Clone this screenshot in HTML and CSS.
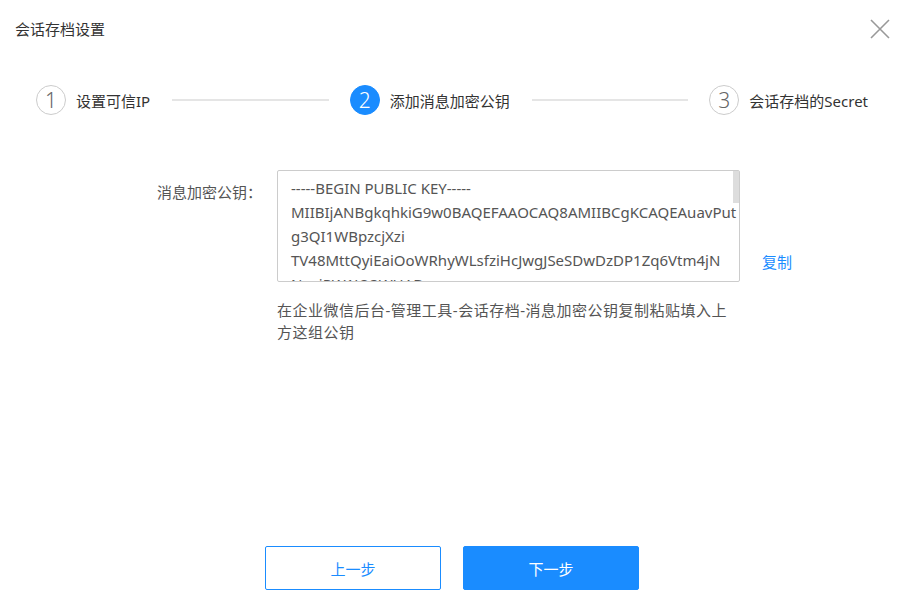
FILE: index.html
```html
<!DOCTYPE html>
<html lang="zh">
<head>
    <meta charset="UTF-8">
    <meta name="viewport" content="width=device-width, initial-scale=1.0">
    <title>会话存档设置</title>
    <link rel="stylesheet" href="styles.css">
</head>
<body>
    <div class="dialog">
        <div class="header">
            <span class="title">会话存档设置</span>
            <span class="close">
                <svg width="20" height="20" viewBox="0 0 20 20"><path d="M1 1L19 19M19 1L1 19" stroke="#999" stroke-width="1.6" fill="none"/></svg>
            </span>
        </div>
        <div class="steps">
            <div class="step">
                <span class="num">1</span>
                <span class="name">设置可信IP</span>
            </div>
            <div class="line"></div>
            <div class="step active">
                <span class="num">2</span>
                <span class="name">添加消息加密公钥</span>
            </div>
            <div class="line"></div>
            <div class="step">
                <span class="num">3</span>
                <span class="name">会话存档的Secret</span>
            </div>
        </div>
        <div class="form">
            <div class="row">
                <label class="label">消息加密公钥：</label>
                <div class="keybox">
                    <div class="key">
                        <div>-----BEGIN PUBLIC KEY-----</div>
                        <div>MIIBIjANBgkqhkiG9w0BAQEFAAOCAQ8AMIIBCgKCAQEAuavPut</div>
                        <div>g3QI1WBpzcjXzi</div>
                        <div>TV48MttQyiEaiOoWRhyWLsfziHcJwgJSeSDwDzDP1Zq6Vtm4jN</div>
                        <div>NoviPW1JO3WHAB</div>
                        <div>kF0r8vU5xLmT2aQpWcZ7sYdE4hGnRtXo9KbL3mVq8uPzA1sC6e</div>
                        <div>DjH2wNf0tYgR5i</div>
                        <div>Zr4hTy8nWcQ1pLs0kEo6bVd9xGf2jAuH3mYtNq7iPwSKd5gLp2</div>
                        <div>zRx9vBn0cMa8qW</div>
                        <div>Pq1wEr5tYu8iOp2aSd6fGh9jKl3zXc7vBn0mQw4eRtHj6kLz1x</div>
                        <div>Cv4bNm8qWe2rTy</div>
                        <div>IDAQAB</div>
                        <div>-----END PUBLIC KEY-----</div>
                    </div>
                    <span class="thumb"></span>
                </div>
                <a class="copy" href="#">复制</a>
            </div>
            <p class="tip">在企业微信后台-管理工具-会话存档-消息加密公钥复制粘贴填入上方这组公钥</p>
        </div>
        <div class="footer">
            <button class="btn">上一步</button>
            <button class="btn primary">下一步</button>
        </div>
    </div>
</body>
</html>
```

FILE: styles.css
```css
body,p{
    margin: 0;
    padding: 0;
}
body{
    font-family: "Noto Sans", "Noto Sans CJK SC", sans-serif;
    color: #333;
    background: #fff;
}
.dialog{
    display: flex;
    flex-direction: column;
    height: 616px;
}
.header{
    display: flex;
    justify-content: space-between;
    align-items: center;
    padding: 17px 22px 0 15px;
    height: 22px;
}
.title{
    font-size: 15px;
    color: #333;
}
.close{
    display: flex;
    margin-top: 2px;
}
.steps{
    display: flex;
    align-items: center;
    padding: 0 44px 0 36px;
    margin-top: 46px;
}
.step{
    display: flex;
    align-items: center;
}
.step .num{
    width: 28px;
    height: 28px;
    border: 1px solid #ccc;
    border-radius: 50%;
    display: flex;
    align-items: center;
    justify-content: center;
    font-size: 21px;
    font-weight: 300;
    color: #666;
}
.step.active .num{
    background: #1a8cff;
    border-color: #1a8cff;
    color: #fff;
}
.step .name{
    margin-left: 10px;
    font-size: 15px;
    color: #333;
}
.line{
    flex: 1;
    height: 2px;
    background: #e5e5e5;
    margin: 0 21px 0 22px;
}
.form{
    margin-top: 55px;
}
.row{
    display: flex;
    align-items: flex-start;
}
.label{
    width: 262px;
    text-align: right;
    font-size: 15px;
    color: #555;
    line-height: 22px;
    margin-top: 11px;
}
.keybox{
    position: relative;
    margin-left: 15px;
}
.key{
    width: 448px;
    height: 110px;
    padding: 0 0 0 13px;
    border: 1px solid #ccc;
    border-radius: 2px;
    overflow: hidden;
    font-size: 15px;
    line-height: 24px;
    color: #555;
}
.key div{
    white-space: pre;
}
.key div:first-child{
    margin-top: 5px;
}
.thumb{
    position: absolute;
    top: 1px;
    right: 1px;
    width: 6px;
    height: 32px;
    background: #ddd;
}
.copy{
    align-self: flex-end;
    margin: 0 0 10px 22px;
    font-size: 15px;
    color: #1a8cff;
    text-decoration: none;
}
.tip{
    margin: 17px 0 0 277px;
    width: 463px;
    font-size: 15px;
    letter-spacing: 0.5px;
    line-height: 22px;
    color: #555;
}
.footer{
    margin-top: auto;
    display: flex;
    justify-content: center;
    gap: 22px;
    padding: 0 8px 26px 0;
}
.btn{
    width: 176px;
    height: 44px;
    border: 1px solid #1a8cff;
    border-radius: 2px;
    background: #fff;
    color: #1a8cff;
    font-size: 15px;
    font-family: inherit;
}
.btn.primary{
    background: #1a8cff;
    color: #fff;
}
```
